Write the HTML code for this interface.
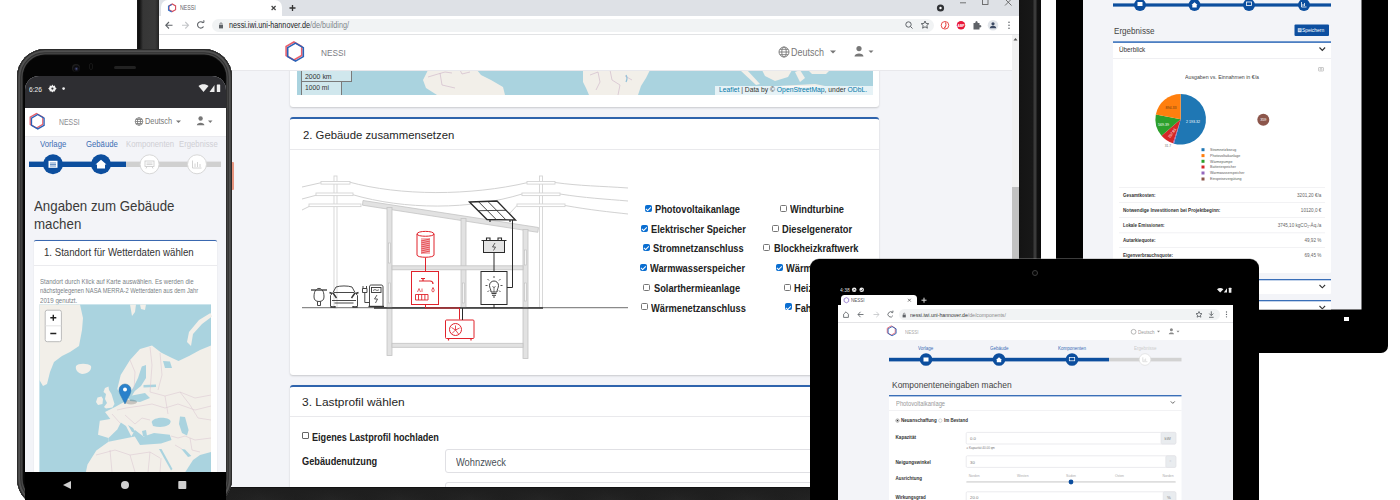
<!DOCTYPE html>
<html><head><meta charset="utf-8">
<style>
*{margin:0;padding:0;box-sizing:border-box}
html,body{width:1400px;height:500px;overflow:hidden;background:#fff;font-family:"Liberation Sans",sans-serif;color:#333}
.a{position:absolute}
.t{position:absolute;white-space:nowrap}
/* laptop */
#lap-bez{left:137px;top:0;width:904px;height:500px;background:#1c1c1c}
#lap-scr{left:159px;top:0;width:860px;height:486px;background:#f3f4f8;overflow:hidden}
/* back tablet */
#tab2{left:1056px;top:-20px;width:333px;height:372px;background:#000;border-radius:0 0 7px 7px}
#tab2-scr{left:1083px;top:0;width:278px;height:309px;background:#f3f4f8;overflow:hidden}
/* front tablet */
#tab1{left:810px;top:259px;width:449px;height:260px;background:#000;border-radius:10px}
#tab1-scr{left:838px;top:282px;width:395px;height:230px;background:#f3f4f8;overflow:hidden}
/* phone */
#ph{left:17px;top:49px;width:215px;height:480px;background:#151515;border-radius:30px;border:1px solid #555}
#ph-scr{left:25px;top:76px;width:201px;height:396px;background:#f3f4f8;overflow:hidden;border-radius:14px 14px 0 0}

.scr{position:absolute;left:0;top:0;width:1400px;height:500px}
.cb{position:absolute;width:7px;height:7px;border:1px solid #767676;border-radius:1.5px;background:#fff}
.cb.on{background:#0a6ed1;border-color:#0a6ed1}
.cb.on::after{content:"";position:absolute;left:1.3px;top:.2px;width:2px;height:3.6px;border:solid #fff;border-width:0 1.1px 1.1px 0;transform:rotate(45deg)}
.cbt{font-size:10.2px;line-height:11px;font-weight:bold;color:#222;transform:scaleX(.91);transform-origin:0 0}
</style></head><body>

<!-- ============ LAPTOP ============ -->
<div class="a" style="left:136.5px;top:0;width:22.5px;height:500px;background:linear-gradient(90deg,#1a1a1a 0,#0e0e0e 2px,#1c1c1c 3.5px,#363636 6px,#3a3a3a 18px,#2a2a2a 21px,#1a1a1a 22.5px)"></div>
<div class="a" style="left:1019px;top:0;width:22px;height:500px;background:linear-gradient(90deg,#141414 0,#181818 14px,#3a3a3a 15px,#3a3a3a 17px,#101010 18px,#0c0c0c 22px)"></div>
<div class="a" style="left:159px;top:487px;width:882px;height:13px;background:linear-gradient(180deg,#0c0c0c 0,#1e1e1e 1.5px,rgba(34,34,34,0) 13px),repeating-linear-gradient(60deg,#1f1f1f 0,#242424 30px,#1f1f1f 60px)"></div>
<div class="scr" style="clip-path:inset(0px 381px 13px 159px)">
  <div class="a" style="left:159px;top:0;width:860px;height:487px;background:#f3f4f8"></div>
  <!-- tab strip -->
  <div class="a" style="left:159px;top:0;width:860px;height:16px;background:#dee1e6"></div>
  <div class="a" style="left:161px;top:0;width:121px;height:16px;background:#fff;border-radius:7px 7px 0 0"></div>
  <svg class="a" style="left:0;top:0" width="1400" height="40">
    <g fill="none" stroke-width="1.1">
      <path d="M172 4.2 L175.3 6.1 L175.3 9.9 L172 11.8 L168.7 9.9 L168.7 6.1Z" stroke="#d44a5a" transform="translate(.3,-.2)"/>
      <path d="M172 4.2 L168.7 6.1 L168.7 9.9 L172 11.8" stroke="#3a6fc4" transform="translate(-.2,.2)"/>
    </g>
    <path d="M271.6 6 L275.6 10 M275.6 6 L271.6 10" stroke="#444" stroke-width="1.2"/>
    <path d="M289.5 8 H295.5 M292.5 5 V11" stroke="#333" stroke-width="1.3"/>
    <!-- window controls -->
    <circle cx="940.5" cy="8" r="3.6" fill="#303236"/><circle cx="940.5" cy="8" r="1.2" fill="#fff"/>
    <path d="M960 2.8 H966" stroke="#555" stroke-width="0.8"/>
    <rect x="982.5" y="-1" width="5.5" height="5.5" fill="none" stroke="#555" stroke-width="0.8"/>
    <path d="M1005 -1 L1011.5 5.5 M1011.5 -1 L1005 5.5" stroke="#555" stroke-width="0.8"/>
  </svg>
  <!-- toolbar -->
  <div class="a" style="left:159px;top:16px;width:860px;height:19px;background:#fff;border-bottom:1px solid #e2e3e5"></div>
  <div class="a" style="left:212px;top:19px;width:722px;height:13px;background:#f1f3f4;border-radius:7px"></div>
  <svg class="a" style="left:0;top:0" width="1400" height="40">
    <g fill="none" stroke="#5f6368" stroke-width="1.1">
      <path d="M166 25.3 H172.5 M169 22 L165.8 25.3 L169 28.5"/>
      <path d="M182 25.3 H188.5 M185.3 22 L188.5 25.3 L185.3 28.5" stroke="#c4c6c9"/>
      <path d="M203.3 23 A3.2 3.2 0 1 0 203.5 26.5"/>
      <path d="M201.6 22.2 L204 22.4 L203.8 20.2" stroke-width="1"/>
    </g>
    <rect x="219" y="25" width="4" height="3.4" fill="#5f6368"/>
    <path d="M220 25.2 V23.8 A1 1 0 0 1 222 23.8 V25.2" fill="none" stroke="#5f6368" stroke-width="0.8"/>
    <g fill="none" stroke="#5f6368" stroke-width="1">
      <circle cx="908.5" cy="24.5" r="2.7"/><path d="M910.5 26.5 L912.5 28.5"/>
      <path d="M925 21 L926.1 23.5 L928.8 23.7 L926.8 25.5 L927.4 28.2 L925 26.8 L922.6 28.2 L923.2 25.5 L921.2 23.7 L923.9 23.5 Z"/>
    </g>
    <circle cx="945" cy="25.3" r="3.8" fill="none" stroke="#e53935" stroke-width="0.9"/>
    <path d="M945.3 22.5 C946.5 24 946 26.5 944.3 28" fill="none" stroke="#e53935" stroke-width="1.1"/>
    <circle cx="961" cy="25.3" r="4.2" fill="#e8173a"/>
    <text x="961" y="26.8" font-size="3.3" font-family="Liberation Sans" fill="#fff" text-anchor="middle" font-weight="bold">ABP</text>
    <path d="M973.5 23 h2 a1.2 1.2 0 1 1 2 0 h2 v2.2 a1.2 1.2 0 1 1 0 2 v2.3 h-6 z" fill="#5f6368"/>
    <circle cx="993" cy="25.3" r="5.3" fill="#e1e5ea"/>
    <circle cx="993" cy="23.8" r="1.6" fill="#3c4a64"/>
    <path d="M989.8 28.3 A3.2 2.5 0 0 1 996.2 28.3 Z" fill="#3c4a64"/>
    <g fill="#5f6368"><circle cx="1009" cy="22.2" r=".8"/><circle cx="1009" cy="25.2" r=".8"/><circle cx="1009" cy="28.2" r=".8"/></g>
  </svg>
  <div class="t" style="left:229px;top:19.5px;font-size:8.6px;line-height:11px;color:#202124;transform:scaleX(.84);transform-origin:0 0">nessi.iwi.uni-hannover.de<span style="color:#80868b">/de/building/</span></div>
  <div class="t" style="left:180px;top:3.3px;font-size:6.4px;line-height:9px;color:#5f6368;transform:scaleX(.82);transform-origin:0 0">NESSI</div>
  <!-- scrollbar -->
  <div class="a" style="left:1012px;top:35px;width:7px;height:451px;background:#f1f1f1"></div>
  <div class="a" style="left:1012px;top:187px;width:7px;height:299px;background:#c1c1c1"></div>
  <svg class="a" style="left:1012px;top:36px" width="7" height="6"><path d="M1.5 4.5 L3.5 2 L5.5 4.5Z" fill="#505050"/></svg>
  <!-- card 1 -->
  <div class="a" style="left:290px;top:60px;width:589px;height:47px;background:#fff;border-radius:3px;box-shadow:0 1px 2px rgba(0,0,0,.18)"></div>
  <svg class="a" style="left:0;top:0" width="1400" height="100">
    <rect x="297" y="70" width="576" height="25" fill="#aad3df"/>
    <g fill="#f2efe9">
      <path d="M428 70 L477 70 L481 75 L491 80 L503 87 L505 95 L437 95 L426 88 L423 80 Z"/>
      <path d="M583 70 L650 70 L646 78 L641 86 L638 95 L589 95 L586 88 L583 82 Z"/>
      <path d="M740 70 L747 70 L760 84 L756 85 Z"/>
      <path d="M762 70 L792 70 L788 77 L775 81 L765 76 Z"/>
      <path d="M795 72 L800 70 L805 78 L800 82 Z"/>
      <path d="M778 86 L815 84 L825 86 L790 88 Z"/>
      <path d="M808 70 L830 70 L826 74 L812 74 Z"/>
    </g>
    <g fill="none" stroke="#cdb3c7" stroke-width=".6">
      <path d="M428 77 L438 74 L445 72 L452 73 M440 73 L442 85 L455 88 M460 70 L462 74 L470 72"/>
      <path d="M590 75 L598 72 L600 82 L596 90 M610 70 L612 80 L620 85 L618 95 M625 76 L632 80"/>
    </g>
    <path d="M626 75 C628 78 627 80 626 82" stroke="#90c0d8" stroke-width="1.2" fill="none"/>
  </svg>
  <div class="a" style="left:301px;top:70px;width:51px;height:11.5px;background:rgba(255,255,255,.45);border:1.5px solid #7a7a7a;border-top:none"></div>
  <div class="t" style="left:305px;top:73px;font-size:7.1px;line-height:8px;color:#333;transform:scaleX(.98);transform-origin:0 0">2000 km</div>
  <div class="a" style="left:301px;top:81.5px;width:41px;height:13.5px;background:rgba(255,255,255,.45);border:1.5px solid #7a7a7a;border-top:none;border-bottom:none"></div>
  <div class="t" style="left:305px;top:84px;font-size:7.1px;line-height:8px;color:#333;transform:scaleX(.95);transform-origin:0 0">1000 mi</div>
  <div class="a" style="left:715px;top:85.5px;width:158px;height:9.5px;background:rgba(255,255,255,.7)"></div>
  <div class="t" id="attr" style="left:718.5px;top:86px;font-size:7.1px;line-height:8.5px;color:#333;transform:scaleX(.953);transform-origin:0 0"><span style="color:#0078a8">Leaflet</span> | Data by © <span style="color:#0078a8">OpenStreetMap</span>, under <span style="color:#0078a8">ODbL.</span></div>
  <!-- navbar -->
  <div class="a" style="left:159px;top:35px;width:853px;height:35px;background:#fff;box-shadow:0 1px 0 #e8e8ec"></div>

  <div class="t" style="left:321px;top:47px;font-size:9.6px;line-height:11px;color:#7b7b83;transform:scaleX(.86);transform-origin:0 0">NESSI</div>
  <svg class="a" style="left:770px;top:40px" width="120" height="25">
    <g fill="none" stroke="#777" stroke-width=".9"><circle cx="14" cy="12" r="5"/><ellipse cx="14" cy="12" rx="2.2" ry="5"/><path d="M9 12 H19 M10 9.3 H18 M10 14.7 H18"/></g>
    <path d="M60 10.5 L66 10.5 L63 13.5Z" fill="#777"/>
    <circle cx="89" cy="8.6" r="2.6" fill="#777"/><path d="M84.5 16.5 C84.5 12.5 93.5 12.5 93.5 16.5 Z" fill="#777"/>
    <path d="M98.5 10.5 L103.5 10.5 L101 13Z" fill="#777"/>
  </svg>
  <div class="t" style="left:790.5px;top:46.5px;font-size:10.2px;line-height:11px;color:#777;transform:scaleX(.88);transform-origin:0 0">Deutsch</div>
  <!-- card 2 -->
  <div class="a" style="left:290px;top:117px;width:589px;height:258px;background:#fff;border-top:2px solid #2f64ad;border-radius:3px;box-shadow:0 1px 2px rgba(0,0,0,.18)"></div>
  <div class="a" style="left:290px;top:149px;width:589px;height:1px;background:#e9e9ec"></div>
  <div class="t" id="h2" style="left:302.5px;top:128px;font-size:11.7px;line-height:14px;color:#262626;transform:scaleX(.97);transform-origin:0 0">2. Gebäude zusammensetzen</div>
  <!-- card 3 -->
  <div class="a" style="left:290px;top:385px;width:589px;height:120px;background:#fff;border-top:2px solid #2f64ad;border-radius:3px;box-shadow:0 1px 2px rgba(0,0,0,.18)"></div>
  <div class="a" style="left:290px;top:416px;width:589px;height:1px;background:#e9e9ec"></div>
  <div class="t" id="h3" style="left:302px;top:395px;font-size:11.7px;line-height:14px;color:#262626;transform:scaleX(1.02);transform-origin:0 0">3. Lastprofil wählen</div>
  <div class="a" style="left:302px;top:432px;width:6.5px;height:6.5px;border:1px solid #666;border-radius:1px;background:#fff"></div>
  <div class="t" style="left:312px;top:432px;font-size:10px;line-height:11px;font-weight:bold;color:#222;transform:scaleX(.91);transform-origin:0 0">Eigenes Lastprofil hochladen</div>
  <div class="t" style="left:302px;top:456px;font-size:10px;line-height:11px;font-weight:bold;color:#222;transform:scaleX(.92);transform-origin:0 0">Gebäudenutzung</div>
  <div class="a" style="left:445px;top:449px;width:440px;height:24px;background:#fff;border:1px solid #e0e0e4;border-radius:3px"></div>
  <div class="t" style="left:456px;top:456.5px;font-size:10px;line-height:11px;color:#495057;transform:scaleX(.93);transform-origin:0 0">Wohnzweck</div>
  <div class="a" style="left:445px;top:482px;width:440px;height:24px;background:#fff;border:1px solid #e0e0e4;border-radius:3px"></div>
  <svg class="a" style="left:0;top:0" width="1400" height="500">
    <!-- logo -->
    <g fill="none" stroke-width="1.6">
      <path d="M294.5 42.5 L302.3 47 L302.3 56 L294.5 60.5 L286.7 56 L286.7 47 Z" stroke="#e8606c" transform="translate(-.6,-.5)"/>
      <path d="M294.5 42.5 L302.3 47 L302.3 56 L294.5 60.5 L286.7 56 L286.7 47 Z" stroke="#2a62b8" transform="translate(1,.6)"/>
    </g>
    <!-- wires -->
    <g fill="none" stroke="#d2d2d2" stroke-width="1">
      <path d="M302 187 L322 182.5 M349 182 C400 196 470 196 528 182.5 M555 182.5 C580 186 600 186 628 188"/>
      <path d="M302 199 L317 195 M352 194.5 C405 210 470 210 522 194 M560 194 C585 198 605 199 628 201"/>
      <path d="M302 210 L310 206 M510 213 L517 205.5 M565 205.5 C590 210 610 212 628 214"/>
    </g>
    <g fill="#fff" stroke="#d4d4d4" stroke-width=".9">
      <rect x="334" y="176" width="3" height="132"/>
      <rect x="321" y="181.5" width="29" height="2.6"/><rect x="316" y="193" width="37" height="2.6"/><rect x="309" y="204" width="52" height="2.6"/>
      <rect x="539.5" y="176" width="3" height="132"/>
      <rect x="527" y="181.5" width="28" height="2.6"/><rect x="522" y="193" width="38" height="2.6"/><rect x="517" y="204" width="48" height="2.6"/>
    </g>
    <!-- ground -->
    <path d="M302 307.6 H628" stroke="#8a8a8a" stroke-width="1.3"/>
    <!-- house -->
    <g fill="#e2e2e2" stroke="#c4c4c4" stroke-width=".8">
      <path d="M363 200.5 L538.5 227.5 L537.8 232.3 L362.5 205.2 Z"/>
      <rect x="387" y="207.5" width="5" height="148"/>
      <rect x="461" y="218.5" width="5" height="89"/>
      <rect x="523" y="229.5" width="5" height="129"/>
      <rect x="392" y="265.8" width="131" height="4"/>
      <rect x="392" y="343.3" width="131" height="4"/>
    </g>
    <g fill="#f5f5f5" stroke="#bdbdbd" stroke-width=".6">
      <rect x="388.5" y="243" width="2" height="20"/><rect x="388.5" y="283" width="2" height="20"/>
      <rect x="462.5" y="283" width="2" height="20"/><rect x="524.5" y="250" width="2" height="15"/><rect x="524.5" y="283" width="2" height="18"/>
    </g>
    <path d="M374 308 H543" stroke="#333" stroke-width="1.4"/>
    <!-- red system -->
    <g fill="none" stroke="#e0222b" stroke-width="1">
      <path d="M417 234 C417 230.5 434 230.5 434 234 V255 C434 258 417 258 417 255 Z"/>
      <path d="M417 234 C417 237 434 237 434 234"/>
      <path d="M421 239 H430 L421 241 H430 L421 243 H430 L421 245 H430 L421 247 H430 L421 249 H430 L421 251 H430 L421 253 H430" stroke-width=".7"/>
      <path d="M425.5 257.5 V271.5"/>
      <rect x="411.5" y="271.5" width="27" height="33"/>
      <path d="M425.5 304.5 V308 H459.5 V319.5"/>
      <rect x="445.5" y="320" width="28.5" height="18.5" rx="1"/>
      <circle cx="455.5" cy="329.5" r="6"/>
      <path d="M455.5 330 L455.5 325.5 M455.5 330 L459.6 328 M455.5 330 L458.5 334 M455.5 330 L452 333.5 M455.5 330 L451.5 327.5" stroke-width=".8"/>
      <path d="M448.5 338.5 V340.5 M471 338.5 V340.5" stroke-width="1.2"/>
      <path d="M419 281 H427 M423 278.5 V281 M421 278.5 H425 M427 281 H430 C432 281 433 282 433 284" stroke-width="1.2"/>
      <path d="M433 287.5 C434.5 290 434.5 291.5 433 292 C431.5 291.5 431.5 290 433 287.5" stroke-width=".8"/>
      <path d="M415.5 294.5 H428 V300 H415.5 Z M418.5 294.5 V300 M421.7 294.5 V300 M424.9 294.5 V300" stroke-width=".9"/>
      <path d="M417.5 292 L419 288.5 L420.5 292 M422 288.5 V292" stroke-width=".7"/>
    </g>
    <!-- black system -->
    <g fill="none" stroke="#2a2a2a" stroke-width="1">
      <path d="M469.5 202 L497 201 L515.5 220 L487 219.5 Z" fill="#fff" stroke-width="1.3"/>
      <path d="M478 210.7 L506 210.3 M478.5 201.7 L496.5 219.8 M487.8 201.4 L506 219.9" stroke="#333" stroke-width=".9"/>
      <path d="M490 219.6 V222 M510 219.9 V222" stroke-width="1.2"/>
      <path d="M512.5 220 V287.5 H507"/>
      <rect x="483.5" y="240.5" width="21" height="12" fill="#e4e4e4"/>
      <path d="M481.5 240.5 H506.5 M486.5 240.5 V238 H490 V240.5 M498 240.5 V238 H501.5 V240.5" stroke-width="1.1"/>
      <path d="M495 243 L492.5 247 H495.5 L493.5 250.5" stroke-width=".7"/>
      <path d="M494 252.5 V271.5"/>
      <rect x="481" y="271.5" width="26" height="33"/>
      <path d="M491 292 C491 289 489.5 288 489.5 285.5 A4.5 4.5 0 0 1 498.5 285.5 C498.5 288 497 289 497 292 Z" stroke-width=".9"/>
      <path d="M491.5 293.5 H496.5 M492 295.3 H496 M493 297 H495" stroke-width=".9"/>
      <path d="M494 292 V288 L492.5 286 M494 288 L495.5 286" stroke-width=".6"/>
      <path d="M485.5 285.5 H487.5 M500.5 285.5 H502.5 M494 276 V278 M487.5 279 L489 280.5 M500.5 279 L499 280.5 M487.5 292 L489 290.5 M500.5 292 L499 290.5" stroke-width=".8"/>
      <path d="M494 304.5 V308 M462.5 308 V320"/>
    </g>
    <!-- vehicles -->
    <g fill="none" stroke="#333" stroke-width=".9">
      <path d="M311 290 H327" stroke-width="1.3"/>
      <path d="M316 290 C314.5 291 314 294 314 297 C314 300 316 301.5 319 301.5 C322 301.5 324 300 324 297 C324 294 323.5 291 322 290"/>
      <path d="M316.5 289.5 C317 288 321 288 321.5 289.5"/>
      <path d="M317.5 301.5 V305.5 H320.5 V301.5"/>
      <path d="M330.5 306 V295.5 L333 292.5 L336 287 C340 285.6 348 285.6 352 287 L355 292.5 L357.5 295.5 V306"/>
      <path d="M334 292.5 H354 M332 300.5 H356 M334.5 303 H353.5"/>
      <path d="M333 293 L336.5 298 M355 293 L351.5 298" stroke-width="1.4"/>
      <path d="M329.5 292.5 L332 293.5 M358.5 292.5 L356 293.5" stroke-width="1.4"/>
      <path d="M331 306 V307 H335 V306 M353 306 V307 H357 V306" stroke-width="1.3"/>
      <path d="M363 286 V288.5 M366.5 286 V288.5 M362.5 288.5 H367 V292.5 H362.5 Z M364.8 292.5 V302.5 H369.5"/>
      <path d="M369.5 306 V287 C369.5 285.5 370 285 371.5 285 H381 C382.5 285 383 285.5 383 287 V306"/>
      <rect x="371.5" y="287.5" width="9.5" height="5"/>
      <path d="M368.5 306.5 H384" stroke-width="1.4"/>
      <path d="M377 295 L374.5 299 H377.5 L375.5 303" stroke-width=".8"/>
      <path d="M373 290.5 L375 289.5 L377 290.5 L379 289.8" stroke-width=".7"/>
    </g>
  </svg>
  <!-- checkboxes -->
  <div class="cbl">
    <div class="cb on" style="left:644.5px;top:204.8px"></div><div class="t cbt" style="left:655px;top:204px">Photovoltaikanlage</div>
    <div class="cb on" style="left:641px;top:224.5px"></div><div class="t cbt" style="left:651px;top:223.7px">Elektrischer Speicher</div>
    <div class="cb on" style="left:643px;top:244.2px"></div><div class="t cbt" style="left:653px;top:243.4px">Stromnetzanschluss</div>
    <div class="cb on" style="left:640px;top:264px"></div><div class="t cbt" style="left:650px;top:263.1px">Warmwasserspeicher</div>
    <div class="cb" style="left:643px;top:283.6px"></div><div class="t cbt" style="left:654px;top:282.8px">Solarthermieanlage</div>
    <div class="cb" style="left:641px;top:303.4px"></div><div class="t cbt" style="left:651px;top:302.5px">Wärmenetzanschluss</div>
    <div class="cb" style="left:780px;top:204.8px"></div><div class="t cbt" style="left:790px;top:204px">Windturbine</div>
    <div class="cb" style="left:772px;top:224.5px"></div><div class="t cbt" style="left:782px;top:223.7px">Dieselgenerator</div>
    <div class="cb" style="left:763px;top:244.2px"></div><div class="t cbt" style="left:773.5px;top:243.4px">Blockheizkraftwerk</div>
    <div class="cb on" style="left:776px;top:264px"></div><div class="t cbt" style="left:786px;top:263.1px">Wärmepumpe</div>
    <div class="cb" style="left:784px;top:283.6px"></div><div class="t cbt" style="left:794px;top:282.8px">Heizstab</div>
    <div class="cb on" style="left:785px;top:303.4px"></div><div class="t cbt" style="left:795px;top:302.5px">Fahrzeug</div>
  </div>
</div>

<!-- ============ BACK TABLET ============ -->
<div class="a" style="left:1056px;top:-20px;width:332.3px;height:372.5px;background:#000;border-radius:0 0 7px 7px"></div>
<div class="a" style="left:1344px;top:316.5px;width:4.5px;height:4.5px;background:#fff"></div>
<div class="scr" style="clip-path:inset(0px 38.5px 190.5px 1083px)">
  <div class="a" style="left:1083px;top:0;width:278.5px;height:310px;background:#f3f4f8"></div>
  <svg class="a" style="left:0;top:0" width="1400" height="320">
    <rect x="1113" y="3.4" width="218" height="3.2" fill="#0c4e9e"/>
    <circle cx="1140" cy="5" r="6" fill="#0c4e9e"/><circle cx="1194.5" cy="5" r="6" fill="#0c4e9e"/>
    <circle cx="1249" cy="5" r="6" fill="#0c4e9e"/><circle cx="1304" cy="5" r="6" fill="#0c4e9e"/>
    <rect x="1137.5" y="2" width="5" height="4" fill="#fff"/>
    <path d="M1191.5 5 L1194.5 2.2 L1197.5 5 L1196.7 5 L1196.7 7.5 L1192.3 7.5 L1192.3 5Z" fill="#fff"/>
    <rect x="1246.5" y="2" width="5" height="3.5" fill="none" stroke="#fff" stroke-width=".8"/>
    <path d="M1301.5 2 V7 H1306.5 M1303 6 V4 M1304.5 6 V3" fill="none" stroke="#fff" stroke-width=".8"/>
    <!-- save btn -->
    <rect x="1294.5" y="24.5" width="34.5" height="11.5" rx="1" fill="#0d4fa0"/>
    <rect x="1297.8" y="28.2" width="3.8" height="4" fill="#d8e2f0"/><path d="M1298.5 29.3 H1300.9 M1298.5 30.5 H1300.9" stroke="#0d4fa0" stroke-width=".4"/>
    <!-- card 1 -->
    <rect x="1113" y="41" width="218" height="232" rx="1.5" fill="#fff"/>
    <rect x="1113" y="41.2" width="218" height="1.8" fill="#4d7fc2"/>
    <rect x="1113" y="58" width="218" height=".8" fill="#ececef"/>
    <path d="M1319.5 47.5 L1322.3 50.3 L1325.1 47.5" fill="none" stroke="#333" stroke-width="1.2"/>
    <g fill="none" stroke="#aaa" stroke-width=".6"><rect x="1318.5" y="67.5" width="5" height="3.5" rx=".5"/><circle cx="1321" cy="69.2" r="1"/></g>
    <path d="M1180.7 119.25 L1180.70 93.95 A25.3 25.3 0 1 1 1173.94 143.63 Z" fill="#1f77b4"/>
    <path d="M1180.7 119.25 L1173.94 143.63 A25.3 25.3 0 0 1 1172.88 143.31 Z" fill="#9467bd"/>
    <path d="M1180.7 119.25 L1172.88 143.31 A25.3 25.3 0 0 1 1161.52 135.75 Z" fill="#d62728"/>
    <path d="M1180.7 119.25 L1161.52 135.75 A25.3 25.3 0 0 1 1155.84 114.55 Z" fill="#2ca02c"/>
    <path d="M1180.7 119.25 L1155.84 114.55 A25.3 25.3 0 0 1 1180.70 93.95 Z" fill="#ff7f0e"/>
    <g font-family="Liberation Sans" font-size="3.6" fill="#fff" text-anchor="middle">
      <text x="1193" y="122.8">2 193.32</text><text x="1171" y="109" fill="#6b3a10">894.33</text><text x="1163.5" y="126">569.39</text>
      <text x="1172" y="134.5" transform="rotate(-55 1172 133)">297.61</text>
      <text x="1263.3" y="121" font-size="3.8">359</text>
    </g>
    <text x="1168" y="146.5" font-family="Liberation Sans" font-size="3.3" fill="#777" text-anchor="middle">31.7</text>
    <circle cx="1263.3" cy="119.8" r="6" fill="#8c564b"/>
    <text x="1263.3" y="121.2" font-family="Liberation Sans" font-size="3.8" fill="#fff" text-anchor="middle">359</text>
    <g>
      <rect x="1201.5" y="148.2" width="3" height="3" fill="#1f77b4"/>
      <rect x="1201.5" y="154.1" width="3" height="3" fill="#ff7f0e"/>
      <rect x="1201.5" y="159.8" width="3" height="3" fill="#2ca02c"/>
      <rect x="1201.5" y="165.5" width="3" height="3" fill="#d62728"/>
      <rect x="1201.5" y="171.5" width="3" height="3" fill="#9467bd"/>
      <rect x="1201.5" y="177.5" width="3" height="3" fill="#8c564b"/>
    </g>
    <g font-family="Liberation Sans" font-size="3.6" fill="#5a5a5a">
      <text x="1210" y="151">Stromnetzbezug</text><text x="1210" y="157">Photovoltaikanlage</text><text x="1210" y="162.7">Wärmepumpe</text>
      <text x="1210" y="168.4">Batteriespeicher</text><text x="1210" y="174.4">Warmwasserspeicher</text><text x="1210" y="180.4">Einspeisevergütung</text>
    </g>
    <g fill="#ececef">
      <rect x="1119" y="187" width="206" height=".7"/><rect x="1119" y="202" width="206" height=".7"/><rect x="1119" y="217.1" width="206" height=".7"/>
      <rect x="1119" y="232.5" width="206" height=".7"/><rect x="1119" y="247.3" width="206" height=".7"/>
    </g>
    <g font-family="Liberation Sans" font-size="4.6" font-weight="bold" fill="#333">
      <text x="1123" y="196.5" textLength="32.5" lengthAdjust="spacingAndGlyphs">Gesamtkosten:</text>
      <text x="1123" y="211.6" textLength="97.4" lengthAdjust="spacingAndGlyphs">Notwendige Investitionen bei Projektbeginn:</text>
      <text x="1123" y="226.9" textLength="41.6" lengthAdjust="spacingAndGlyphs">Lokale Emissionen:</text>
      <text x="1123" y="242" textLength="32.5" lengthAdjust="spacingAndGlyphs">Autarkiequote:</text>
      <text x="1123" y="257.1" textLength="50" lengthAdjust="spacingAndGlyphs">Eigenverbrauchsquote:</text>
    </g>
    <g font-family="Liberation Sans" font-size="4.6" fill="#666" text-anchor="end">
      <text x="1321.3" y="196.5">3201,20 €/a</text>
      <text x="1321.3" y="211.6">10120,0 €</text>
      <text x="1321.3" y="226.9">3745,10 kgCO₂-Äq./a</text>
      <text x="1321.3" y="242">49,92 %</text>
      <text x="1321.3" y="257.1">69,45 %</text>
    </g>
    <!-- card 2,3 -->
    <rect x="1113" y="279" width="218" height="15" rx="1" fill="#fff"/>
    <rect x="1113" y="279" width="218" height="1.3" fill="#3a6fb8"/>
    <path d="M1319.5 285 L1322.3 287.8 L1325.1 285" fill="none" stroke="#333" stroke-width="1.1"/>
    <rect x="1113" y="300" width="218" height="15" rx="1" fill="#fff"/>
    <rect x="1113" y="300" width="218" height="1.3" fill="#3a6fb8"/>
    <path d="M1319.5 306 L1322.3 308.8 L1325.1 306" fill="none" stroke="#333" stroke-width="1.1"/>
  </svg>
  <div class="t" style="left:1114.2px;top:26px;font-size:9.3px;line-height:10px;color:#444;transform:scaleX(.87);transform-origin:0 0">Ergebnisse</div>
  <div class="t" style="left:1302px;top:27px;font-size:5.6px;line-height:6px;color:#fff;transform:scaleX(.88);transform-origin:0 0">Speichern</div>
  <div class="t" style="left:1119px;top:46px;font-size:7px;line-height:8px;color:#333;transform:scaleX(.9);transform-origin:0 0">Überblick</div>
  <div class="t" style="left:1185.4px;top:72.8px;font-size:6.1px;line-height:7px;color:#444;transform:scaleX(.86);transform-origin:0 0">Ausgaben vs. Einnahmen in €/a</div>
</div>

<!-- ============ FRONT TABLET ============ -->
<div class="a" style="left:810px;top:259px;width:449px;height:260px;background:#000;border-radius:9px;box-shadow:0 -.6px .6px rgba(150,150,150,.8)"></div>
<div class="a" style="left:1031.6px;top:270.2px;width:6px;height:6px;border-radius:50%;background:#050505;border:.9px solid #3c3c3c"></div>
<svg class="a" style="left:0;top:0" width="1400" height="310">
  <g fill="#eee">
    <circle cx="854.2" cy="289.8" r="2.3"/><circle cx="861.7" cy="289.8" r="2.3"/>
    <path d="M1217 289.2 C1218.8 287.6 1221.6 287.6 1223.4 289.2 L1220.2 292.6Z"/>
    <path d="M1223.8 292.6 L1227 288.2 L1227 292.6Z"/>
    <rect x="1228.8" y="287.8" width="2.6" height="5" rx=".4"/>
  </g>
  <path d="M853.2 290.5 L854.5 289 L855.2 290.5 M860.5 290 L861.5 291 L863 288.8" fill="none" stroke="#000" stroke-width=".6"/>
</svg>
<div class="t" style="left:840px;top:286.5px;font-size:5.5px;line-height:7px;color:#ddd;transform:scaleX(.9);transform-origin:0 0">4:38</div>
<div class="scr" style="clip-path:inset(294px 167px 0px 838px)">
  <div class="a" style="left:838px;top:294px;width:395px;height:210px;background:#000"></div>
  <div class="a" style="left:841px;top:294.6px;width:75.5px;height:11px;background:#fff;border-radius:3.5px 3.5px 0 0"></div>
  <div class="a" style="left:838px;top:305.4px;width:395px;height:17.6px;background:#fff;border-bottom:.8px solid #e4e4e6"></div>
  <div class="a" style="left:899px;top:309.3px;width:320.7px;height:10.6px;background:#f1f3f4;border-radius:5.3px"></div>
  <div class="a" style="left:838px;top:323px;width:395px;height:17px;background:#fff;box-shadow:0 .8px 0 #ececf0"></div>
  <div class="a" style="left:838px;top:340px;width:395px;height:170px;background:#f3f4f8"></div>
  <svg class="a" style="left:0;top:0" width="1400" height="500">
    <path d="M846.4 297.6 L848.7 298.9 L848.7 301.5 L846.4 302.8 L844.1 301.5 L844.1 298.9Z" fill="none" stroke="#8a6fc8" stroke-width=".8"/>
    <path d="M908 298.8 L910.8 301.6 M910.8 298.8 L908 301.6" stroke="#555" stroke-width=".8"/>
    <path d="M921.5 300.2 H926.5 M924 297.7 V302.7" stroke="#ddd" stroke-width="1"/>
    <g fill="none" stroke="#5f6368" stroke-width=".85">
      <path d="M843.6 317.4 V314.2 L846 311.8 L848.4 314.2 V317.4 Z" stroke-linejoin="miter"/>
      <path d="M858 314.5 H863.5 M860.5 311.8 L858 314.5 L860.5 317.2"/>
      <path d="M873.5 314.5 H879 M876.3 311.8 L879 314.5 L876.3 317.2" stroke="#c4c6c9"/>
      <path d="M892.6 312.8 A2.6 2.6 0 1 0 892.9 315.6"/><path d="M891.2 312 L893 312.3 L892.9 310.6"/>
      <path d="M1199 311.5 L1199.9 313.5 L1202 313.7 L1200.4 315.1 L1200.9 317.2 L1199 316.1 L1197.1 317.2 L1197.6 315.1 L1196 313.7 L1198.1 313.5 Z"/>
    </g>
    <rect x="902.6" y="314.8" width="3.2" height="2.6" fill="#5f6368"/>
    <path d="M903.4 315 V313.9 A.8 .8 0 0 1 905 313.9 V315" fill="none" stroke="#5f6368" stroke-width=".6"/>
    <path d="M1211.3 311.3 V315.5 M1209.3 313.6 L1211.3 315.6 L1213.3 313.6 M1209 317.3 H1213.6" fill="none" stroke="#5f6368" stroke-width=".9"/>
    <g fill="#5f6368"><circle cx="1226.5" cy="312" r=".65"/><circle cx="1226.5" cy="314.4" r=".65"/><circle cx="1226.5" cy="316.8" r=".65"/></g>
    <!-- navbar -->
    <g fill="none" stroke-width=".9">
      <path d="M891.6 326.2 L895.6 328.5 L895.6 333.1 L891.6 335.4 L887.6 333.1 L887.6 328.5 Z" stroke="#e8606c" transform="translate(-.35,-.3)"/>
      <path d="M891.6 326.2 L895.6 328.5 L895.6 333.1 L891.6 335.4 L887.6 333.1 L887.6 328.5 Z" stroke="#2a62b8" transform="translate(.5,.35)"/>
    </g>
    <circle cx="1133.6" cy="331.8" r="2.4" fill="none" stroke="#999" stroke-width=".7"/>
    <path d="M1157 330.8 L1160 330.8 L1158.5 332.5Z M1176.5 330.8 L1179.5 330.8 L1178 332.5Z" fill="#888"/>
    <circle cx="1171.4" cy="329.8" r="1.5" fill="#888"/><path d="M1168.8 334.3 C1168.8 332 1174 332 1174 334.3Z" fill="#888"/>
    <!-- progress -->
    <rect x="889" y="357.8" width="220" height="3.6" fill="#0c4e9e"/>
    <rect x="1109" y="357.8" width="72.5" height="3.6" fill="#d2d2d2"/>
    <circle cx="926" cy="359.5" r="6.3" fill="#0c4e9e"/><circle cx="999" cy="359.5" r="6.3" fill="#0c4e9e"/><circle cx="1072" cy="359.5" r="6.3" fill="#0c4e9e"/>
    <circle cx="1145" cy="359.5" r="5.8" fill="#fff" stroke="#dcdcdc" stroke-width=".7"/>
    <rect x="923.5" y="357.5" width="5" height="4" fill="#fff"/>
    <path d="M996 360 L999 357.3 L1002 360 L1001.2 360 L1001.2 362.3 L996.8 362.3 L996.8 360Z" fill="#fff"/>
    <rect x="1069.3" y="357.5" width="5.4" height="3.3" fill="none" stroke="#fff" stroke-width=".7"/>
    <path d="M1142.8 357.3 V361.7 H1147.4 M1144.2 361 V359.3 M1145.6 361 V358.5" fill="none" stroke="#ccc" stroke-width=".6"/>
    <!-- card -->
    <rect x="889" y="395" width="292.5" height="120" rx="1.5" fill="#fff"/>
    <rect x="889" y="395" width="292.5" height="1.4" fill="#3a6fb8"/>
    <rect x="889" y="410.2" width="292.5" height=".7" fill="#ececef"/>
    <path d="M1170.8 401.4 L1172.8 403.4 L1174.8 401.4" fill="none" stroke="#555" stroke-width=".9"/>
    <circle cx="897.5" cy="420.6" r="1.7" fill="#fff" stroke="#777" stroke-width=".6"/><circle cx="897.5" cy="420.6" r=".8" fill="#333"/>
    <circle cx="940.3" cy="420.6" r="1.7" fill="#fff" stroke="#bbb" stroke-width=".6"/>
    <!-- inputs -->
    <rect x="966.2" y="432.4" width="209.6" height="11.6" rx="1.2" fill="#fff" stroke="#e3e3e6" stroke-width=".7"/>
    <rect x="1161" y="432.4" width="14.8" height="11.6" rx="1.2" fill="#e9ecef" stroke="#e3e3e6" stroke-width=".7"/>
    <rect x="966.2" y="455.8" width="209.6" height="11.6" rx="1.2" fill="#fff" stroke="#e3e3e6" stroke-width=".7"/>
    <rect x="1165.8" y="455.8" width="10" height="11.6" rx="1.2" fill="#e9ecef" stroke="#e3e3e6" stroke-width=".7"/>
    <rect x="966.2" y="481" width="209.6" height="1.8" rx=".9" fill="#dedede"/>
    <circle cx="1071" cy="482" r="2.4" fill="#0c4e9e"/>
    <rect x="966.2" y="491.8" width="209.6" height="11.6" rx="1.2" fill="#fff" stroke="#e3e3e6" stroke-width=".7"/>
    <rect x="1163.2" y="491.8" width="12.6" height="11.6" rx="1.2" fill="#e9ecef" stroke="#e3e3e6" stroke-width=".7"/>
    <g font-family="Liberation Sans" font-size="3.4" fill="#aaa" text-anchor="middle">
      <text x="974.2" y="477.3">Norden</text><text x="1022.8" y="477.3">Westen</text><text x="1071" y="477.3">Süden</text><text x="1119.4" y="477.3">Osten</text><text x="1168" y="477.3">Norden</text>
    </g>
    <g font-family="Liberation Sans" font-size="4.3" fill="#777">
      <text x="970" y="439.5">0.0</text><text x="970" y="463.5">30</text><text x="970" y="499">20.0</text>
      <text x="1164.5" y="439.5">kW</text><text x="1169.5" y="463" fill="#aaa">°</text><text x="1167" y="499">%</text>
    </g>
    <text x="966.5" y="449" font-family="Liberation Sans" font-size="3" fill="#777">≥ Kapazität 40.00 qm</text>
    <g font-family="Liberation Sans" font-size="4.6" font-weight="bold" fill="#333">
      <text x="901" y="422.3" textLength="35.7" lengthAdjust="spacingAndGlyphs">Neuanschaffung</text>
      <text x="944" y="422.3" textLength="24" lengthAdjust="spacingAndGlyphs">Im Bestand</text>
      <text x="895.5" y="439.3" textLength="20.5" lengthAdjust="spacingAndGlyphs">Kapazität</text>
      <text x="895.5" y="463.5" textLength="35.3" lengthAdjust="spacingAndGlyphs">Neigungswinkel</text>
      <text x="895.5" y="480.3" textLength="26.4" lengthAdjust="spacingAndGlyphs">Ausrichtung</text>
      <text x="895.5" y="498.5" textLength="30.2" lengthAdjust="spacingAndGlyphs">Wirkungsgrad</text>
    </g>
  </svg>
  <div class="t" style="left:850.9px;top:297.2px;font-size:5px;line-height:6px;color:#555;transform:scaleX(.9);transform-origin:0 0">NESSI</div>
  <div class="t" style="left:910.2px;top:311.6px;font-size:5.6px;line-height:6.5px;color:#333;transform:scaleX(.92);transform-origin:0 0">nessi.iwi.uni-hannover.de<span style="color:#888">/de/components/</span></div>
  <div class="t" style="left:904.6px;top:328.5px;font-size:5px;line-height:6px;color:#aaa;transform:scaleX(.9);transform-origin:0 0">NESSI</div>
  <div class="t" style="left:1137.6px;top:329px;font-size:5px;line-height:6px;color:#999;transform:scaleX(.9);transform-origin:0 0">Deutsch</div>
  <div class="t" style="left:917.8px;top:344.6px;font-size:5px;line-height:6px;color:#3a6db5;transform:scaleX(.9);transform-origin:0 0">Vorlage</div>
  <div class="t" style="left:989.8px;top:344.6px;font-size:5px;line-height:6px;color:#3a6db5;transform:scaleX(.9);transform-origin:0 0">Gebäude</div>
  <div class="t" style="left:1057.6px;top:344.6px;font-size:5px;line-height:6px;color:#3a6db5;transform:scaleX(.9);transform-origin:0 0">Komponenten</div>
  <div class="t" style="left:1134.4px;top:344.6px;font-size:5px;line-height:6px;color:#ccc;transform:scaleX(.9);transform-origin:0 0">Ergebnisse</div>
  <div class="t" id="kem" style="left:892.2px;top:380.2px;font-size:9.4px;line-height:10px;color:#444;transform:scaleX(.9);transform-origin:0 0">Komponenteneingaben machen</div>
  <div class="t" style="left:895.8px;top:399.6px;font-size:7px;line-height:8px;color:#999;transform:scaleX(.83);transform-origin:0 0">Photovoltaikanlage</div>
</div>

<!-- ============ PHONE ============ -->
<div class="a" style="left:17px;top:49px;width:215px;height:458px;background:#050505;border-radius:28px;box-shadow:inset 0 0 0 1.2px #2a2a2a,inset 0 0 0 3.2px #505050,inset 0 0 0 4.2px #303030,inset 0 0 0 5.6px #474747,inset 0 0 0 6.6px #0c0c0c"></div>
<div class="a" style="left:231.5px;top:162px;width:2px;height:28px;background:#e8957f;border-radius:0 1px 1px 0"></div>
<div class="a" style="left:72px;top:63.5px;width:8px;height:8px;border-radius:50%;background:radial-gradient(circle at 55% 60%,#4a5a9a 0,#223 1.2px,#08080c 2.5px,#111 3.2px,#1d1d1d 4px)"></div><div class="a" style="left:88.5px;top:63px;width:4px;height:7px;border-radius:2px;border:.6px solid #161616"></div>
<div class="a" style="left:114px;top:66px;width:22px;height:3px;border-radius:2px;background:#222"></div>
<div class="scr" style="clip-path:inset(76px 1174px 0px 25px round 14px 14px 0 0)">
  <div class="a" style="left:25px;top:76px;width:201px;height:424px;background:#f3f4f8"></div>
  <!-- status bar -->
  <div class="a" style="left:25px;top:76px;width:201px;height:32px;background:#2e2e32"></div>
  <div class="t" style="left:29px;top:84.5px;font-size:7.4px;line-height:9px;color:#eee;transform:scaleX(.9);transform-origin:0 0">6:26</div>
  <svg class="a" style="left:0;top:76px" width="240" height="32">
    <g fill="#eee">
      <circle cx="52.4" cy="12.6" r="2.8"/>
      <path d="M52.4 8.6 L53.3 9.9 L55 9.6 L55.2 11.3 L56.6 12.6 L55.2 13.9 L55 15.6 L53.3 15.3 L52.4 16.6 L51.5 15.3 L49.8 15.6 L49.6 13.9 L48.2 12.6 L49.6 11.3 L49.8 9.6 L51.5 9.9Z"/>
      <circle cx="63.6" cy="12.6" r="1.3"/>
      <path d="M198.5 10 C201 7.5 206 7.5 208.5 10 L203.5 16 Z"/>
      <path d="M209.5 16 L214.5 9 L214.5 16 Z"/>
      <rect x="216.8" y="8.5" width="3.4" height="7.5" rx=".5"/>
    </g>
    <circle cx="52.4" cy="12.6" r="1.1" fill="#2e2e32"/>
  </svg>
  <!-- navbar -->
  <div class="a" style="left:25px;top:108px;width:201px;height:28px;background:#fff;box-shadow:0 1px 0 #ebebef"></div>
  <svg class="a" style="left:0;top:100px" width="240" height="100">
    <g fill="none" stroke-width="1.3">
      <path d="M37 14 L43.3 17.6 L43.3 24.8 L37 28.4 L30.7 24.8 L30.7 17.6 Z" stroke="#e8606c" transform="translate(-.5,-.4)"/>
      <path d="M37 14 L43.3 17.6 L43.3 24.8 L37 28.4 L30.7 24.8 L30.7 17.6 Z" stroke="#2a62b8" transform="translate(.8,.5)"/>
    </g>
    <g fill="none" stroke="#777" stroke-width=".8"><circle cx="139" cy="21.5" r="3.8"/><ellipse cx="139" cy="21.5" rx="1.6" ry="3.8"/><path d="M135.2 21.5 H142.8 M135.8 19.5 H142.2 M135.8 23.5 H142.2"/></g>
    <path d="M176 20.5 L181 20.5 L178.5 23Z" fill="#777"/>
    <circle cx="200.6" cy="18.5" r="2.2" fill="#777"/><path d="M196.8 25.3 C196.8 21.8 204.4 21.8 204.4 25.3 Z" fill="#777"/>
    <path d="M208 20.5 L212.5 20.5 L210.25 23Z" fill="#777"/>
    <!-- progress -->
    <rect x="29" y="61.6" width="97" height="5.4" fill="#0c4e9e"/>
    <rect x="126" y="61.6" width="95" height="5.4" fill="#d0d0d0"/>
    <circle cx="53" cy="64.3" r="10" fill="#0c4e9e"/>
    <circle cx="101" cy="64.3" r="10" fill="#0c4e9e"/>
    <circle cx="149.6" cy="64.3" r="9.5" fill="#fff" stroke="#d8d8d8" stroke-width="1"/>
    <circle cx="197" cy="64.3" r="9.5" fill="#fff" stroke="#d8d8d8" stroke-width="1"/>
    <rect x="48.5" y="60.8" width="9" height="7" fill="#fff"/>
    <path d="M50 63 H56 M50 64.5 H56 M50 66 H56" stroke="#0c4e9e" stroke-width=".6"/>
    <path d="M95.5 64.5 L101 59.8 L106.5 64.5 L105 64.5 L105 68.5 L97 68.5 L97 64.5 Z" fill="#fff"/>
    <g fill="none" stroke="#c9c9c9" stroke-width=".8">
      <rect x="145" y="61" width="9" height="5.5"/><path d="M147 66.5 L146 68.5 M152 66.5 L153 68.5 M146.5 63 H152.5 M146.5 64.6 H152.5"/>
      <path d="M192.5 60.5 V68 H201.5 M195 67 V63.5 M197.5 67 V62 M200 67 V64"/>
    </g>
  </svg>
  <div class="t" style="left:59px;top:117.5px;font-size:8.3px;line-height:9px;color:#8a8a90;transform:scaleX(.83);transform-origin:0 0">NESSI</div>
  <div class="t" style="left:145px;top:116.5px;font-size:8.6px;line-height:9px;color:#777;transform:scaleX(.86);transform-origin:0 0">Deutsch</div>
  <div class="t" style="left:40px;top:140px;font-size:8.6px;line-height:9px;color:#3c6eb4;transform:scaleX(.9);transform-origin:0 0">Vorlage</div>
  <div class="t" style="left:86px;top:140px;font-size:8.6px;line-height:9px;color:#3c6eb4;transform:scaleX(.9);transform-origin:0 0">Gebäude</div>
  <div class="t" style="left:125.6px;top:140px;font-size:8.6px;line-height:9px;color:#cfcfd4;transform:scaleX(.9);transform-origin:0 0">Komponenten</div>
  <div class="t" style="left:179px;top:140px;font-size:8.6px;line-height:9px;color:#cfcfd4;transform:scaleX(.9);transform-origin:0 0">Ergebnisse</div>
  <!-- heading -->
  <div class="t" style="left:33.5px;top:198.4px;font-size:14.3px;line-height:17px;color:#3a3a3a;transform:scaleX(.93);transform-origin:0 0">Angaben zum Gebäude</div>
  <div class="t" style="left:33.5px;top:215.6px;font-size:14.3px;line-height:17px;color:#3a3a3a;transform:scaleX(.93);transform-origin:0 0">machen</div>
  <!-- card -->
  <div class="a" style="left:33.5px;top:239.5px;width:183.5px;height:260px;background:#fff;border-top:1.6px solid #3a68b0;border-radius:2px;box-shadow:0 0 1px rgba(0,0,0,.2)"></div>
  <div class="a" style="left:33.5px;top:265px;width:183.5px;height:1px;background:#ebebee"></div>
  <div class="t" style="left:44px;top:246px;font-size:10.5px;line-height:12px;color:#333;transform:scaleX(.92);transform-origin:0 0">1. Standort für Wetterdaten wählen</div>
  <div class="t" style="left:39.5px;top:276.6px;font-size:6.8px;line-height:9.45px;color:#7a7f86;transform:scaleX(.895);transform-origin:0 0">Standort durch Klick auf Karte auswählen. Es werden die</div>
  <div class="t" style="left:39.5px;top:286.05px;font-size:6.8px;line-height:9.45px;color:#7a7f86;transform:scaleX(.85);transform-origin:0 0">nächstgelegenen NASA MERRA-2 Wetterdaten aus dem Jahr</div>
  <div class="t" style="left:39.5px;top:295.5px;font-size:6.8px;line-height:9.45px;color:#7a7f86;transform:scaleX(.905);transform-origin:0 0">2019 genutzt.</div>
  <!-- map -->
  <svg class="a" style="left:0;top:0" width="240" height="500">
    <rect x="39.4" y="304.4" width="171.6" height="170" fill="#aad3df"/>
    <g fill="#f2efe9">
      <path d="M39.4 304.4 L80 304.4 L83 318 L82 330 L79 346 L70 352 L62 356 L54 362 L50 372 L47 384 L43 386 L39.4 380 Z"/>
      <path d="M76 366 C78 363 88 363 91 366 C92 370 88 374 82 374 C78 373 75 370 76 366Z"/>
      <path d="M130 304.4 L136 304.4 L135 312 L132 316 Z M140 304.4 L146 304.4 L145 310 L141 309Z"/>
      <path d="M210.5 313 L212 316.5 L202 324 L193 334 L191 346 L187 342 L189 332 L199 320 Z"/>
      <path d="M211 345.5 L200 350 L189 356 L178.5 361 L171.5 357.8 L161 352.5 L152 345.5 L140 349 L130 360 L120.7 375 L117.3 389 L120.8 394.5 L124 396 L126 400 L124 402 L115.5 406.8 L105 412 L110.3 419 L99.8 420.8 L98 434.8 L108.5 438 L108.5 441.8 L96.3 450.5 L87.5 464.5 L85.8 472.4 L211 472.4 Z"/>
      <path d="M105 388 L108.5 386.5 L109 390 L111.5 394 L113 399 L114.5 404 L112.5 407.5 L106 408.5 L104 407 L107 403 L105 399 L106 394 L103.5 392 Z M97.5 397.5 L101.5 396.5 L103 399 L102.5 404 L98 405 L96 402 Z"/>
    </g>
    <g fill="#aad3df">
      <path d="M108.5 438 L117.3 429.5 L120.8 422.5 L126 426 L131.3 436.5 L135 430 L143.5 436.5 L154 433 L169.8 434.8 L171.5 440 L161 443.5 L140 445 L134.8 436.5 L126 438.3 L108.5 441.8 Z"/>
      <path d="M151.7 422 C153 417 168 416 170.6 421 C171 426 162 428.5 153 426Z"/>
      <path d="M180 416.5 L185 417 L188.6 430 L187 435.4 L182 433 L179 424 Z"/>
      <path d="M159 449 L161.5 449 L172.5 469 L171 470.5 Z"/>
      <path d="M181.4 449 L185 449.5 L191.3 456 L188 457 Z"/>
      <path d="M185 472.4 L193 460 L200 455 L211 452 L211 472.4 Z"/>
      <path d="M141.8 366.5 L146 365 L146 378 L141 386 L134.8 391 L129.5 399.8 L127 397 L133 388 L138 378 Z"/>
      <path d="M129.5 396 L145 393 L150 398 L140 402 L130 401 Z M143.5 385 L156 384.5 L156 387 L143.5 387.5 Z"/>
      <path d="M163 361 L170 361.5 L172 368 L165 368 Z"/>
      <path d="M128 425 L133 428 L136 433 L132 432 Z M142 431 L146 430 L147 436 L143 436 Z"/>
    </g>
    <g fill="none" stroke="#d9c3cf" stroke-width=".5">
      <path d="M130 360 L135 372 L134 390 M150 347 L152 365 L150 392 M160 353 L162 375 L158 390 M150 392 L165 396 L180 392 L195 398 L211 395"/>
      <path d="M117 410 L126 408 L140 406 L152 404 L165 408 L178 404 L195 410 L211 406 M112 414 L120 423 M125 415 L135 424 L142 418 L150 420 M165 396 L168 414 M180 392 L190 405 L198 418 L211 420"/>
      <path d="M171 436 L178 438 L185 436 L195 440 L211 438 M175 445 L182 449 M190 438 L192 450 L200 452"/>
      <path d="M96 455 L115 450 L130 455 L150 452 L160 458 M110 450 L112 472 M130 455 L135 472 M150 452 L148 472 M161 458 L160 472"/>
    </g>
    <!-- zoom control -->
    <rect x="45.2" y="310.2" width="16.2" height="31.5" rx="2" fill="#fff" stroke="#bbb" stroke-width="1"/>
    <path d="M45.2 325.8 H61.4" stroke="#ddd" stroke-width=".8"/>
    <path d="M50.3 317.8 H56.3 M53.3 314.8 V320.8 M50.3 333.5 H56.3" stroke="#222" stroke-width="1.4"/>
    <!-- marker -->
    <ellipse cx="131" cy="402" rx="6" ry="2.5" fill="rgba(0,0,0,.18)"/>
    <path d="M125 404 C121 396 119 393 119 390 A6 6 0 0 1 131 390 C131 393 129 396 125 404Z" fill="#2a81cb" stroke="#3274a3" stroke-width=".5"/>
    <circle cx="125" cy="389.6" r="2" fill="#fff"/>
  </svg>
  <!-- nav bar -->
  <div class="a" style="left:25px;top:472px;width:201px;height:28px;background:#000"></div>
  <svg class="a" style="left:0;top:472px" width="240" height="28">
    <path d="M71 9 L63 13 L71 17Z" fill="#cfcfcf"/>
    <circle cx="125" cy="13" r="4" fill="#cfcfcf"/>
    <rect x="178.3" y="9" width="8" height="8" rx=".8" fill="#cfcfcf"/>
  </svg>
</div>

</body></html>
